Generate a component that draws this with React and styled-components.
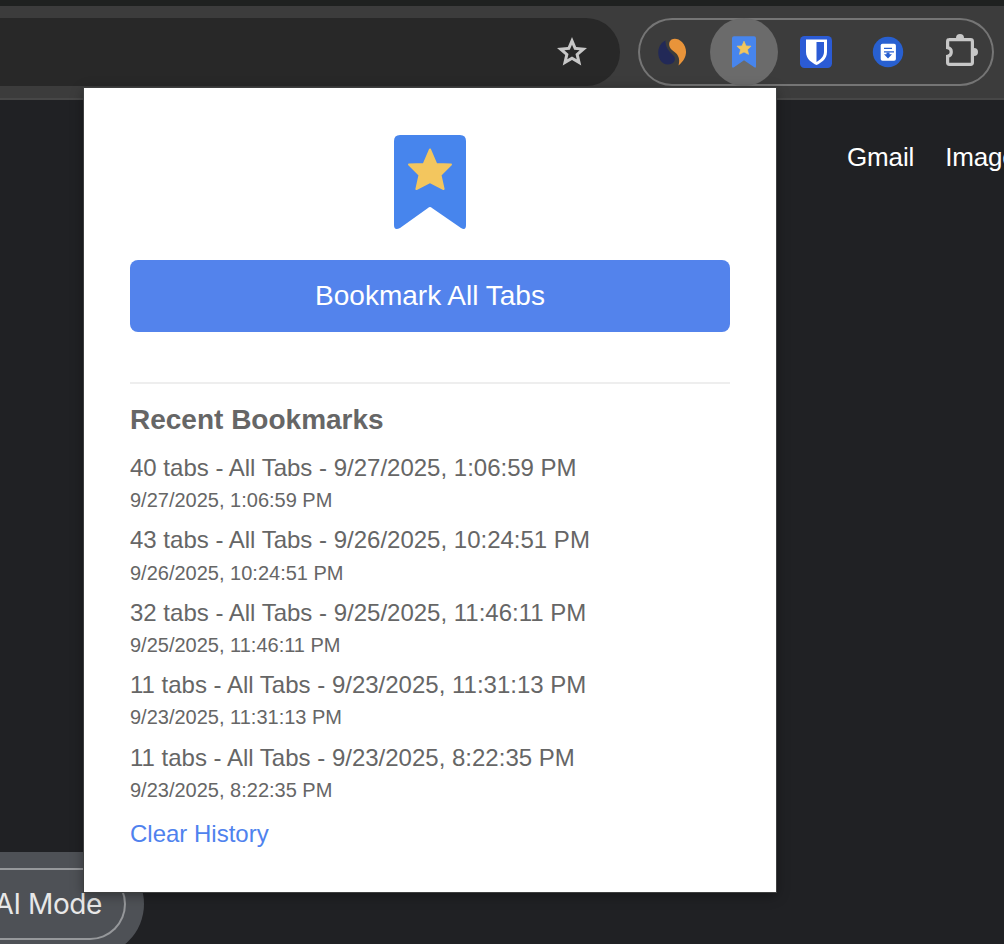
import React from "react";
import styled, { createGlobalStyle } from "styled-components";

const GlobalStyle = createGlobalStyle`
  * { box-sizing: border-box; }
  body {
    margin: 0;
    background: #202124;
    font-family: "Liberation Sans", Arial, sans-serif;
    overflow: hidden;
  }
`;

const Browser = styled.div`
  position: relative;
  display: flex;
  flex-direction: column;
  width: 1004px;
  height: 944px;
  overflow: hidden;
  background: #202124;
`;

const Toolbar = styled.header`
  display: flex;
  height: 100px;
  flex: none;
  padding-top: 12px;
  background: #3c3c3c;
  border-top: 6px solid #1f2120;
  border-bottom: 2px solid #474747;
`;

const AddressBar = styled.div`
  display: flex;
  align-items: center;
  justify-content: flex-end;
  width: 620px;
  height: 68px;
  padding-right: 30px;
  background: #282828;
  border-radius: 0 34px 34px 0;
`;

const Extensions = styled.div`
  display: flex;
  align-items: center;
  width: 356px;
  height: 68px;
  margin-left: 18px;
  border-radius: 34px;
  box-shadow: inset 0 0 0 2px #757575;
`;

const ExtensionButton = styled.span`
  display: flex;
  flex: none;
  align-items: center;
  justify-content: center;
  width: 68px;
  height: 68px;
  margin-right: 4px;
  border-radius: 50%;
  background: ${({ $active }) => ($active ? "#6b6b6b" : "transparent")};
`;

const Page = styled.main`
  display: flex;
  flex: 1;
  flex-direction: column;
  justify-content: space-between;
`;

const PageNav = styled.nav`
  display: flex;
  gap: 31px;
  padding: 42px 0 0 847px;
  color: #fff;
  font-size: 26px;
  line-height: 30px;
  letter-spacing: -0.15px;
  white-space: nowrap;
`;

const AiModeGlow = styled.div`
  width: 144px;
  height: 104px;
  margin-bottom: -12px;
  padding: 16px 18px 16px 0;
  background: #4e5156;
  border-radius: 0 52px 52px 0;
`;

const AiModeButton = styled.div`
  display: flex;
  align-items: center;
  justify-content: flex-end;
  height: 72px;
  padding: 0 22px 1px 0;
  border: 2px solid #96989b;
  border-left: 0;
  border-radius: 0 36px 36px 0;
  color: #e8e8e8;
  font: 400 28px "Inter", sans-serif;
  letter-spacing: -0.4px;
  white-space: nowrap;
`;

const Popup = styled.section`
  position: absolute;
  top: 88px;
  left: 84px;
  display: flex;
  flex-direction: column;
  width: 692px;
  height: 804px;
  padding: 46px;
  background: #fff;
  color: #666;
  box-shadow: 0 0 0 1px #3f4040, 0 3px 12px rgba(0, 0, 0, 0.4);
`;

const Logo = styled.div`
  display: flex;
  flex: none;
  justify-content: center;
  height: 96px;
`;

const PrimaryButton = styled.button`
  flex: none;
  height: 72px;
  margin-top: 30px;
  padding: 0 0 1px;
  border: 0;
  border-radius: 8px;
  background: #5383ec;
  color: #fff;
  font: 28px "Liberation Sans", Arial, sans-serif;
`;

const History = styled.div`
  margin-top: 50px;
  padding-top: 20px;
  border-top: 2px solid #eee;
`;

const Heading = styled.h2`
  margin: 0 0 16px;
  font-size: 28px;
  line-height: 32px;
`;

const Entries = styled.ul`
  margin: 0;
  padding: 0;
  list-style: none;
`;

const Entry = styled.li`
  height: 72.4px;
  white-space: nowrap;
`;

const EntryTitle = styled.div`
  margin-bottom: 0.2px;
  font-size: 24px;
  line-height: 32px;
`;

const EntryTime = styled.div`
  font-size: 20px;
  line-height: 32px;
`;

const ClearLink = styled.a`
  display: block;
  margin-top: 5px;
  color: #4f82ee;
  font-size: 24px;
  line-height: 30px;
`;

const StarIcon = () => (
  <svg width="36" height="36" viewBox="0 0 24 24" fill="#c7c7c7">
    <path d="m8.85 16.83 3.15-1.9 3.15 1.92-.82-3.6 2.77-2.4-3.65-.32L12 7.12l-1.45 3.38-3.65.32 2.77 2.43-.82 3.58ZM5.82 21l1.63-7.02L2 9.25l7.2-.62L12 2l2.8 6.63 7.2.62-5.45 4.73L18.18 21 12 17.27 5.82 21Z" />
  </svg>
);

const RibbonIcon = ({ width, height }) => (
  <svg width={width} height={height} viewBox="0 0 72 96">
    <path d="M6 1H66Q72 1 72 7V91Q72 97 67 94L38 74Q36 72 34 74L6 94Q0 97 0 91V7Q0 1 6 1Z" fill="#4785ed" />
    <path d="M36 15.5L42.2 30L57 30.5L46.5 41L49.6 55L36 48L22.4 55L25.5 41L15 30.5L29.8 30Z" fill="#f3c65e" stroke="#f3c65e" strokeWidth="2" strokeLinejoin="round" />
  </svg>
);

const SwirlIcon = () => (
  <svg width="32" height="32" viewBox="0 0 32 32">
    <path d="M9.5 4.5C-1 9 0 28 12 28.5C17 28.5 20 25 18.5 21C16.5 17 9 14 9.5 4.5Z" fill="#222957" />
    <path d="M13.5 6C15 1.5 22 1.5 26 6C32.5 13 31 23 22.5 29.5C25 20 20 17 16 14C13.5 12 12.5 9 13.5 6Z" fill="#e9943a" />
  </svg>
);

const ShieldIcon = () => (
  <svg width="32" height="32" viewBox="0 0 32 32">
    <rect width="32" height="32" rx="4.5" fill="#2b5bd5" />
    <path d="M6 3.5H27V16C27 23 21 27 16.5 29C12 27 6 23 6 16Z" fill="#fff" />
    <path d="M16.5 6H24V16C24 20.5 20.5 23.5 16.5 26Z" fill="#2b5bd5" />
  </svg>
);

const DocumentIcon = () => (
  <svg width="32" height="32" viewBox="0 0 32 32">
    <circle cx="16" cy="16" r="15.2" fill="#2860d1" />
    <rect x="8.7" y="7.7" width="15.2" height="17" rx="1.8" fill="#fff" />
    <path d="M12 12.4H20M12 15.8H22" stroke="#2860d1" strokeWidth="1.2" />
    <path d="M14.5 16.4H17.5V18.2H20L16 22.5L12 18.2H14.5Z" fill="#2860d1" />
  </svg>
);

const PuzzleIcon = () => (
  <svg width="36" height="36" viewBox="0 0 36 36">
    <path d="M7 5.6H28.6Q30.4 5.6 30.4 7.4V28.6Q30.4 30.4 28.6 30.4H7.4Q5.6 30.4 5.6 28.6V22.3C10.5 21.5 10.5 14.5 5.6 13.7V7.4Q5.6 5.6 7.4 5.6Z" fill="none" stroke="#c7c7c7" strokeWidth="3.2" />
    <path d="M14 5V4A4 4 0 0 1 22 4V5ZM31 14H32A4 4 0 0 1 32 22H31Z" fill="#c7c7c7" />
  </svg>
);

const entries = [
  [40, "9/27/2025, 1:06:59 PM"],
  [43, "9/26/2025, 10:24:51 PM"],
  [32, "9/25/2025, 11:46:11 PM"],
  [11, "9/23/2025, 11:31:13 PM"],
  [11, "9/23/2025, 8:22:35 PM"],
];

export default function App() {
  return (
    <>
      <GlobalStyle />
      <Browser>
        <Toolbar>
          <AddressBar><StarIcon /></AddressBar>
          <Extensions>
            <ExtensionButton><SwirlIcon /></ExtensionButton>
            <ExtensionButton $active><RibbonIcon width={24} height={32} /></ExtensionButton>
            <ExtensionButton><ShieldIcon /></ExtensionButton>
            <ExtensionButton><DocumentIcon /></ExtensionButton>
            <ExtensionButton><PuzzleIcon /></ExtensionButton>
          </Extensions>
        </Toolbar>
        <Page>
          <PageNav><span>Gmail</span><span>Images</span></PageNav>
          <AiModeGlow><AiModeButton>AI Mode</AiModeButton></AiModeGlow>
        </Page>
        <Popup>
          <Logo><RibbonIcon width={72} height={96} /></Logo>
          <PrimaryButton>Bookmark All Tabs</PrimaryButton>
          <History>
            <Heading>Recent Bookmarks</Heading>
            <Entries>
              {entries.map(([count, time]) => (
                <Entry key={time}>
                  <EntryTitle>{count} tabs - All Tabs - {time}</EntryTitle>
                  <EntryTime>{time}</EntryTime>
                </Entry>
              ))}
            </Entries>
            <ClearLink>Clear History</ClearLink>
          </History>
        </Popup>
      </Browser>
    </>
  );
}
